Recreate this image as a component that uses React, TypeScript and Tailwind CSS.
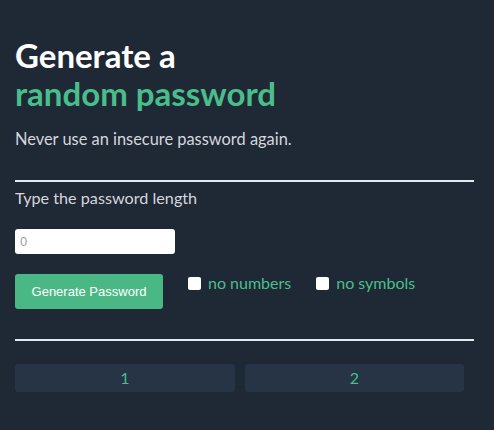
import React from "react";

export default function App() {
  return (
    <div className="w-[494px] h-[430px] bg-[#1f2835] overflow-hidden" style={{ fontFamily: 'Lato, sans-serif' }}>
      <div className="px-[15px] pt-[36px]">
        <h1 className="text-[33px] font-bold leading-[38px] text-white">
          Generate a
          <br />
          <span className="text-[#4abe8a]">random password</span>
        </h1>
        <p className="mt-[17px] text-[16.4px] text-[#d5d7dc] leading-[20px]">Never use an insecure password again.</p>
        <div className="mt-[31px] w-[459px] h-[2px] bg-[#e5e7eb]" />
        <p className="mt-[6px] text-[16.2px] text-[#d5d7dc] leading-[20px]">Type the password length</p>
        <input
          type="number"
          placeholder="0"
          className="mt-[21px] block w-[160px] h-[25px] bg-white rounded-[3px] px-[5px] text-[13px] text-[#333] outline-none"
          style={{ fontFamily: '"Liberation Sans", sans-serif' }}
        />
        <div className="mt-[20px] flex items-start">
          <button
            className="w-[148px] h-[35px] bg-[#4ab885] rounded-[3px] text-white text-[13px]"
            style={{ fontFamily: '"Liberation Sans", sans-serif' }}
          >
            Generate Password
          </button>
          <label className="ml-[25px] flex items-center text-[#4abe8a] text-[16px] leading-[16px] mt-[1px]">
            <span className="w-[13px] h-[13px] bg-white rounded-[2px] mr-[7px]" />
            no numbers
          </label>
          <label className="ml-[25px] flex items-center text-[#4abe8a] text-[16px] leading-[16px] mt-[1px]">
            <span className="w-[13px] h-[13px] bg-white rounded-[2px] mr-[7px]" />
            no symbols
          </label>
        </div>
        <div className="mt-[30px] w-[459px] h-[2px] bg-[#e5e7eb]" />
        <div className="mt-[23px] flex gap-[10px]">
          <div className="w-[220px] h-[28px] bg-[#273445] rounded-[3px] flex items-center justify-center text-[#4abe8a] text-[16px]">1</div>
          <div className="w-[219px] h-[28px] bg-[#273445] rounded-[3px] flex items-center justify-center text-[#4abe8a] text-[16px]">2</div>
        </div>
      </div>
    </div>
  );
}
